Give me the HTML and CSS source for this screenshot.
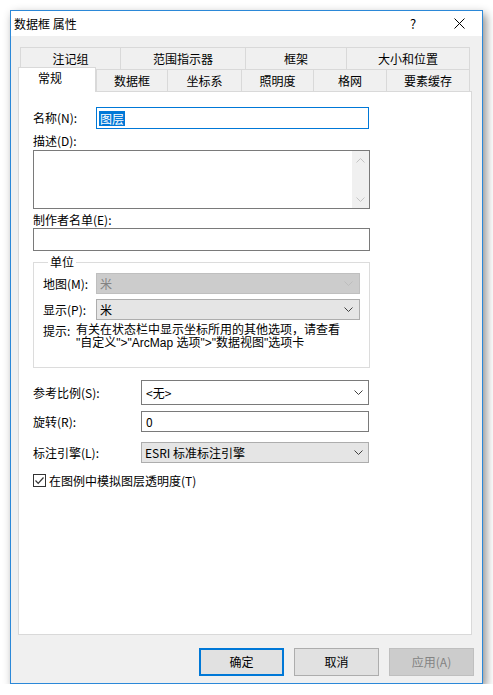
FILE: index.html
```html
<!DOCTYPE html>
<html lang="zh-CN">
<head>
<meta charset="utf-8">
<title>数据框 属性</title>
<link rel="stylesheet" href="styles.css">
</head>
<body>
<div class="window">
  <div class="titlebar">
    <span class="title">数据框 属性</span>
    <span class="tb-btn help">?</span>
    <span class="tb-btn close"><svg width="11" height="11" viewBox="0 0 11 11"><path d="M0.5 0.5 L10.5 10.5 M10.5 0.5 L0.5 10.5" stroke="#000" stroke-width="1" fill="none"/></svg></span>
  </div>
  <div class="client">
    <div class="tabs">
      <div class="tabrow back">
        <div class="tab w100">注记组</div>
        <div class="tab w125">范围指示器</div>
        <div class="tab w101">框架</div>
        <div class="tab w124">大小和位置</div>
      </div>
      <div class="tabrow front">
        <div class="tab sel w78">常规</div>
        <div class="tab w71">数据框</div>
        <div class="tab w74">坐标系</div>
        <div class="tab w72">照明度</div>
        <div class="tab w73">格网</div>
        <div class="tab w84">要素缓存</div>
      </div>
    </div>
    <div class="panel">
      <div class="row name-row">
        <span class="lbl-name">名称(N):</span>
        <div class="field focus"><span class="selected">图层</span></div>
      </div>
      <div class="lbl lbl-desc">描述(D):</div>
      <div class="textarea">
        <div class="vscroll">
          <svg width="9" height="5" viewBox="0 0 9 5"><path d="M0.5 4.5 L4.5 0.5 L8.5 4.5" fill="none" stroke="#c4c4c4"/></svg>
          <svg width="9" height="5" viewBox="0 0 9 5"><path d="M0.5 0.5 L4.5 4.5 L8.5 0.5" fill="none" stroke="#c4c4c4"/></svg>
        </div>
      </div>
      <div class="lbl lbl-credits">制作者名单(E):</div>
      <div class="field wide"></div>

      <fieldset class="group">
        <legend>单位</legend>
        <div class="row unit-row first">
          <span class="lbl-unit">地图(M):</span>
          <div class="combo disabled"><span>米</span>
            <svg width="9" height="5" viewBox="0 0 9 5"><path d="M0.5 0.5 L4.5 4.5 L8.5 0.5" fill="none" stroke="#bdbdbd"/></svg>
          </div>
        </div>
        <div class="row unit-row second">
          <span class="lbl-unit">显示(P):</span>
          <div class="combo"><span>米</span>
            <svg width="9" height="5" viewBox="0 0 9 5"><path d="M0.5 0.5 L4.5 4.5 L8.5 0.5" fill="none" stroke="#404040"/></svg>
          </div>
        </div>
        <div class="hint">
          <span class="hint-lbl">提示:</span>
          <span class="hint-text">有关在状态栏中显示坐标所用的其他选项，请查看<br>"自定义"&gt;"ArcMap 选项"&gt;"数据视图"选项卡</span>
        </div>
      </fieldset>

      <div class="row opt-row scale">
        <span class="lbl-opt">参考比例(S):</span>
        <div class="combo editable"><span>&lt;无&gt;</span>
          <svg width="9" height="5" viewBox="0 0 9 5"><path d="M0.5 0.5 L4.5 4.5 L8.5 0.5" fill="none" stroke="#404040"/></svg>
        </div>
      </div>
      <div class="row opt-row rotate">
        <span class="lbl-opt">旋转(R):</span>
        <div class="field opt"><span>0</span></div>
      </div>
      <div class="row opt-row engine">
        <span class="lbl-opt">标注引擎(L):</span>
        <div class="combo opt"><span>ESRI 标准标注引擎</span>
          <svg width="9" height="5" viewBox="0 0 9 5"><path d="M0.5 0.5 L4.5 4.5 L8.5 0.5" fill="none" stroke="#404040"/></svg>
        </div>
      </div>
      <div class="row check-row">
        <span class="checkbox"><svg width="11" height="11" viewBox="0 0 11 11"><path d="M1.5 5.5 L4.2 8.3 L9.5 2.5" fill="none" stroke="#333" stroke-width="1.2"/></svg></span>
        <span class="check-lbl">在图例中模拟图层透明度(T)</span>
      </div>
    </div>
    <div class="buttons">
      <div class="btn default">确定</div>
      <div class="btn">取消</div>
      <div class="btn disabled">应用(A)</div>
    </div>
  </div>
</div>
</body>
</html>
```

FILE: styles.css
```css
html, body {
  margin: 0;
  padding: 0;
  background: #ffffff;
}
body {
  font-family: "Noto Sans CJK SC", "Microsoft YaHei", sans-serif;
  font-size: 12px;
  line-height: 16px;
  color: #000;
}
.window {
  margin: 10px 0 0 10px;
  width: 473px;
  height: 674px;
  box-sizing: border-box;
  border: 1px solid #2b88d8;
  background: #f0f0f0;
  box-shadow: 3px 4px 9px rgba(0, 0, 0, 0.45);
  display: flex;
  flex-direction: column;
}
.titlebar {
  height: 25px;
  background: #ffffff;
  display: flex;
  align-items: center;
  flex: none;
}
.title {
  flex: 1;
  padding-left: 3px;
  font-size: 12px;
}
.tb-btn {
  width: 46px;
  height: 25px;
  display: flex;
  align-items: center;
  justify-content: center;
}
.help {
  font-size: 13px;
}
.client {
  flex: 1;
  padding: 11px 0 0 7px;
  display: flex;
  flex-direction: column;
}
.tabs {
  position: relative;
  z-index: 2;
}
.tabrow {
  display: flex;
  height: 22px;
}
.tabrow.back {
  margin-left: 2px;
}
.tab {
  box-sizing: border-box;
  height: 22px;
  border: 1px solid #d9d9d9;
  border-right: none;
  border-bottom: none;
  background: #f0f0f0;
  display: flex;
  align-items: center;
  justify-content: center;
  flex: none;
}
.tab:last-child {
  border-right: 1px solid #d9d9d9;
}
.tab.sel {
  height: 25px;
  margin-top: -2px;
  background: #ffffff;
  border-right: 1px solid #d9d9d9;
  padding: 0 14px 4px 0;
  position: relative;
  z-index: 3;
}
.w100 { width: 100px; }
.w125 { width: 125px; }
.w101 { width: 101px; }
.w124 { width: 124px; }
.w78 { width: 78px; }
.w71 { width: 71px; }
.w74 { width: 74px; }
.w72 { width: 72px; }
.w73 { width: 73px; }
.w84 { width: 84px; }

.panel {
  box-sizing: border-box;
  width: 454px;
  height: 544px;
  border: 1px solid #d9d9d9;
  background: #ffffff;
  padding: 15px 0 0 14px;
  flex: none;
}
.row {
  display: flex;
  align-items: center;
}
.name-row {
  height: 22px;
}
.lbl-name {
  width: 63px;
  flex: none;
}
.field {
  box-sizing: border-box;
  border: 1px solid #7a7a7a;
  background: #fff;
  display: flex;
  align-items: center;
  padding-left: 3px;
}
.field.focus {
  width: 273px;
  height: 22px;
  border-color: #0078d7;
  padding-left: 2px;
}
.selected {
  background: #0078d7;
  color: #fff;
  line-height: 15px;
  padding: 0 1px;
}
.lbl-desc {
  margin-top: 4px;
}
.textarea {
  box-sizing: border-box;
  width: 337px;
  height: 59px;
  margin-top: 1px;
  border: 1px solid #7a7a7a;
  background: #fff;
  display: flex;
  justify-content: flex-end;
}
.vscroll {
  width: 17px;
  background: #f0f0f0;
  display: flex;
  flex-direction: column;
  align-items: center;
  justify-content: space-between;
  padding: 7px 0 6px;
  box-sizing: border-box;
}
.lbl-credits {
  margin-top: 3px;
}
.field.wide {
  width: 337px;
  height: 23px;
}

.group {
  box-sizing: border-box;
  width: 337px;
  margin: 3px 0 0 0;
  padding: 0 0 17px 9px;
  border: 1px solid #dcdcdc;
  min-inline-size: 0;
}
.group legend {
  margin-left: 5px;
  padding: 0 2px;
  line-height: 16px;
}
.unit-row {
  height: 21px;
}
.unit-row.first {
  margin-top: 3px;
}
.unit-row.second {
  margin-top: 5px;
}
.lbl-unit {
  width: 53px;
  flex: none;
}
.combo {
  box-sizing: border-box;
  width: 264px;
  height: 21px;
  border: 1px solid #adadad;
  background: #e5e5e5;
  display: flex;
  align-items: center;
  justify-content: space-between;
  padding: 0 6px 0 3px;
}
.combo.disabled {
  background: #cccccc;
  border-color: #bfbfbf;
  color: #838383;
}
.hint {
  display: flex;
  margin-top: 4px;
  line-height: 13px;
}
.hint-lbl {
  width: 33px;
  flex: none;
}
.hint-text {
  font-family: "Liberation Sans", "Noto Sans CJK SC", sans-serif;
}
.opt-row .lbl-opt {
  width: 108px;
  flex: none;
}
.opt-row.scale {
  margin-top: 12px;
  height: 25px;
}
.combo.editable {
  width: 228px;
  height: 25px;
  background: #fff;
  border-color: #7a7a7a;
  padding: 0 5px 0 4px;
}
.opt-row.rotate {
  margin-top: 6px;
  height: 21px;
}
.field.opt {
  width: 228px;
  height: 21px;
  padding-left: 4px;
}
.opt-row.engine {
  margin-top: 10px;
  height: 21px;
}
.combo.opt {
  width: 228px;
  padding: 0 5px 0 3px;
}
.check-row {
  margin-top: 11px;
  height: 13px;
}
.checkbox {
  box-sizing: border-box;
  width: 13px;
  height: 13px;
  border: 1px solid #333;
  background: #fff;
  display: flex;
  align-items: center;
  justify-content: center;
  flex: none;
}
.check-lbl {
  margin-left: 3px;
}
.buttons {
  display: flex;
  justify-content: flex-end;
  gap: 10px;
  margin: 13px 8px 0 0;
}
.btn {
  box-sizing: border-box;
  width: 85px;
  height: 28px;
  border: 1px solid #adadad;
  background: #e1e1e1;
  display: flex;
  align-items: center;
  justify-content: center;
}
.btn.default {
  border: 2px solid #0078d7;
}
.btn.disabled {
  background: #cccccc;
  border-color: #bfbfbf;
  color: #838383;
}
```
